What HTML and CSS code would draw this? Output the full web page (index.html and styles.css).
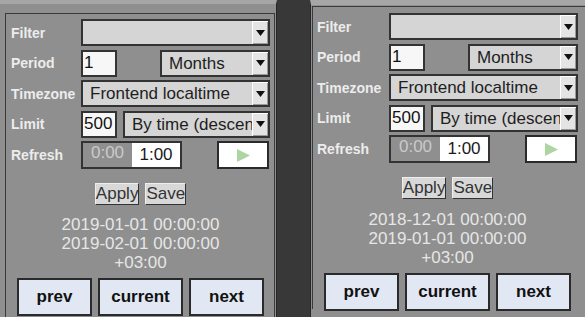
FILE: index.html
```html
<!DOCTYPE html>
<html lang="en">
<head>
    <meta charset="UTF-8">
    <meta name="viewport" content="width=device-width, initial-scale=1.0">
    <title>Period panels</title>
    <link rel="stylesheet" href="styles.css">
</head>
<body>
    <div class="panel">
        <div class="frame">
            <div class="form">
                <span class="label">Filter</span>
                <div class="select"><span class="value"></span><span class="arrow"><svg width="9" height="6" viewBox="0 0 9 6"><path d="M0 0h9L4.5 6z" fill="#111"/></svg></span></div>

                <span class="label">Period</span>
                <div class="cell">
                    <input class="num" type="text" value="1">
                    <div class="select months"><span class="value">Months</span><span class="arrow"><svg width="9" height="6" viewBox="0 0 9 6"><path d="M0 0h9L4.5 6z" fill="#111"/></svg></span></div>
                </div>

                <span class="label">Timezone</span>
                <div class="select"><span class="value">Frontend localtime</span><span class="arrow"><svg width="9" height="6" viewBox="0 0 9 6"><path d="M0 0h9L4.5 6z" fill="#111"/></svg></span></div>

                <span class="label">Limit</span>
                <div class="cell">
                    <input class="num" type="text" value="500">
                    <div class="select order"><span class="value">By time (descending)</span><span class="arrow"><svg width="9" height="6" viewBox="0 0 9 6"><path d="M0 0h9L4.5 6z" fill="#111"/></svg></span></div>
                </div>

                <span class="label">Refresh</span>
                <div class="cell">
                    <div class="timebox"><span class="off">0:00</span><span class="on">1:00</span></div>
                    <button class="play"><svg width="13" height="13" viewBox="0 0 13 13"><path d="M0 0L13 6.5L0 13z" fill="#acd5a2"/></svg></button>
                </div>
            </div>

            <div class="actions">
                <button class="btn-small">Apply</button>
                <button class="btn-small">Save</button>
            </div>

            <div class="dates">
                2019-01-01 00:00:00<br>
                2019-02-01 00:00:00<br>
                +03:00
            </div>

            <div class="nav">
                <button class="prev">prev</button>
                <button class="current">current</button>
                <button class="next">next</button>
            </div>
        </div>
    </div>

    <div class="panel panel--right">
        <div class="frame">
            <div class="form">
                <span class="label">Filter</span>
                <div class="select"><span class="value"></span><span class="arrow"><svg width="9" height="6" viewBox="0 0 9 6"><path d="M0 0h9L4.5 6z" fill="#111"/></svg></span></div>

                <span class="label">Period</span>
                <div class="cell">
                    <input class="num" type="text" value="1">
                    <div class="select months"><span class="value">Months</span><span class="arrow"><svg width="9" height="6" viewBox="0 0 9 6"><path d="M0 0h9L4.5 6z" fill="#111"/></svg></span></div>
                </div>

                <span class="label">Timezone</span>
                <div class="select"><span class="value">Frontend localtime</span><span class="arrow"><svg width="9" height="6" viewBox="0 0 9 6"><path d="M0 0h9L4.5 6z" fill="#111"/></svg></span></div>

                <span class="label">Limit</span>
                <div class="cell">
                    <input class="num" type="text" value="500">
                    <div class="select order"><span class="value">By time (descending)</span><span class="arrow"><svg width="9" height="6" viewBox="0 0 9 6"><path d="M0 0h9L4.5 6z" fill="#111"/></svg></span></div>
                </div>

                <span class="label">Refresh</span>
                <div class="cell">
                    <div class="timebox"><span class="off">0:00</span><span class="on">1:00</span></div>
                    <button class="play"><svg width="13" height="13" viewBox="0 0 13 13"><path d="M0 0L13 6.5L0 13z" fill="#acd5a2"/></svg></button>
                </div>
            </div>

            <div class="actions">
                <button class="btn-small">Apply</button>
                <button class="btn-small">Save</button>
            </div>

            <div class="dates">
                2018-12-01 00:00:00<br>
                2019-01-01 00:00:00<br>
                +03:00
            </div>

            <div class="nav">
                <button class="prev">prev</button>
                <button class="current">current</button>
                <button class="next">next</button>
            </div>
        </div>
    </div>
</body>
</html>
```

FILE: styles.css
```css
* {
    box-sizing: border-box;
}
html, body {
    margin: 0;
    height: 100%;
}
body {
    font-family: "Liberation Sans", Arial, sans-serif;
    background: #383838;
    display: flex;
    gap: 33px;
    overflow: hidden;
}
.panel {
    flex: 0 0 277px;
    width: 277px;
    height: 317px;
    background: #8f8f8f;
    border-top: 4px solid #a6a6a6;
    border-right: 1px solid #262626;
}
.frame {
    height: calc(100% - 9px);
    margin: 9px 1px 0 5px;
    padding: 5px 4px 0 5px;
    border: 1px solid #3a3a3a;
    border-bottom: none;
}
.form {
    display: grid;
    grid-template-columns: 70px minmax(0, 1fr);
    grid-template-rows: repeat(4, 27px) 28px;
    row-gap: 3.5px;
    align-items: center;
}
.label {
    font-size: 14px;
    font-weight: bold;
    color: #ececec;
}
.cell {
    display: flex;
    justify-content: space-between;
    height: 100%;
    min-width: 0;
}
.select {
    display: flex;
    min-width: 0;
    height: 27px;
    border: 2px solid #333;
    background: #d5d5d5;
    font-size: 17px;
    color: #1e1e1e;
}
.select .value {
    flex: 1;
    min-width: 0;
    padding-left: 7px;
    line-height: 23px;
    white-space: nowrap;
    overflow: hidden;
}
.select .arrow {
    flex: 0 0 16px;
    display: flex;
    align-items: center;
    justify-content: center;
    background: #e4e4e4;
    box-shadow: inset 1px 1px 0 #fff, inset -1px -1px 0 #9a9a9a;
}
.months {
    width: 110px;
}
.order {
    flex: 1;
    margin-left: 6px;
}
.num {
    flex: 0 0 36px;
    width: 36px;
    height: 27px;
    margin: 0;
    padding: 0 0 0 1px;
    border: 2px solid #333;
    background: #f7f7f7;
    font: 17px "Liberation Sans", Arial, sans-serif;
    color: #111;
}
.timebox {
    display: flex;
    width: 101px;
    height: 28px;
    border: 2px solid #333;
    font-size: 17px;
}
.timebox .off {
    width: 49px;
    padding-bottom: 4px;
    display: flex;
    align-items: center;
    justify-content: center;
    color: #cacaca;
}
.timebox .on {
    flex: 1;
    display: flex;
    align-items: center;
    justify-content: center;
    background: #fff;
    color: #1a1a1a;
}
.play {
    width: 52px;
    height: 28px;
    margin: 0 1px 0 0;
    padding: 0;
    border: 2px solid #2a2a2a;
    background: #fff;
    display: flex;
    align-items: center;
    justify-content: center;
}
.actions {
    display: flex;
    justify-content: center;
    gap: 6px;
    margin-top: 14px;
}
.btn-small {
    height: 22px;
    padding: 0;
    border: 1px solid;
    border-color: #eee #333 #333 #eee;
    background: #d8d8d8;
    font: 17px "Liberation Sans", Arial, sans-serif;
    color: #333;
}
.dates {
    margin-top: 10px;
    text-align: center;
    font-size: 17px;
    line-height: 19px;
    color: #e6e6e6;
}
.nav {
    display: flex;
    justify-content: center;
    gap: 6px;
    margin-top: 6px;
}
.nav button {
    height: 38px;
    padding: 0;
    border: 2px solid #2a2a2a;
    background: #e1e8f3;
    font: bold 17px "Liberation Sans", Arial, sans-serif;
    color: #111;
}
.prev,
.next {
    width: 75px;
}
.current {
    width: 85px;
}
.panel--right {
    border-top-width: 5px;
    border-right: none;
    border-left: 1px solid #262626;
}
.panel--right .frame {
    margin: 1px 1px 0 1px;
    padding: 6px 7px 0 4px;
}
.panel--right .form {
    grid-template-columns: 72px minmax(0, 1fr);
}
.panel--right .dates {
    margin-top: 11px;
}
```
